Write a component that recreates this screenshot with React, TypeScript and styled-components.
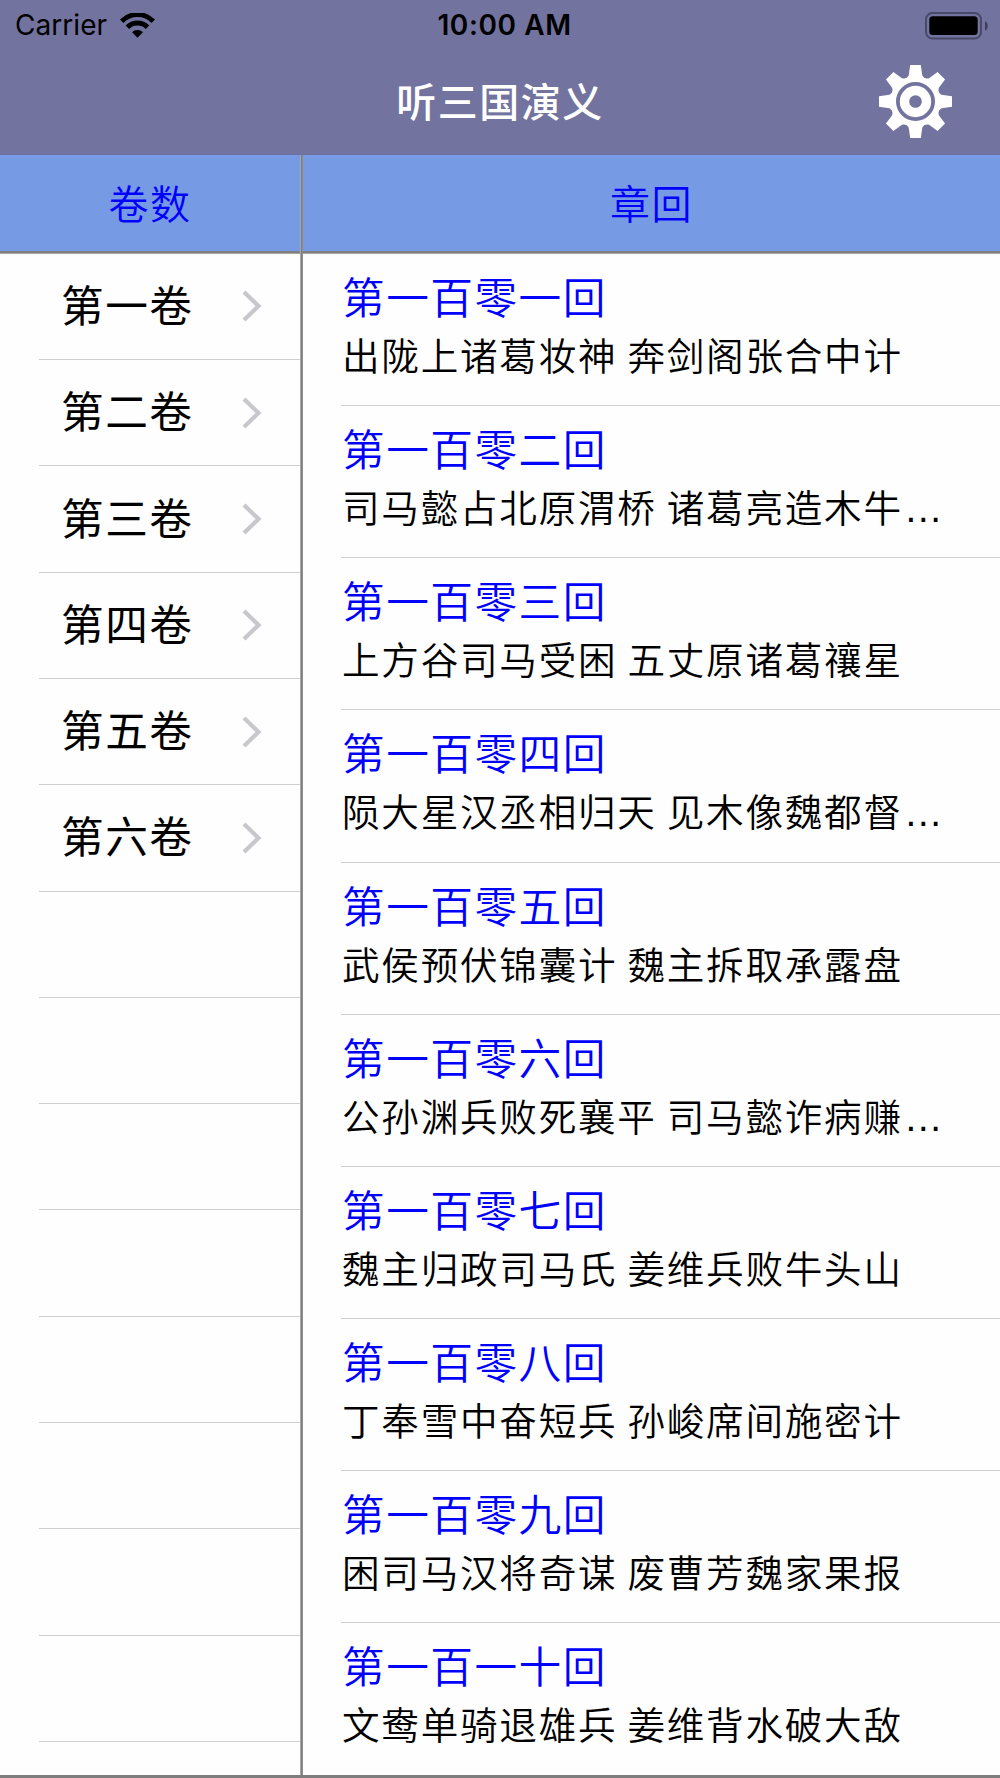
import React from "react";
import styled, { createGlobalStyle } from "styled-components";

const GlobalStyle = createGlobalStyle`
  *, *::before, *::after { box-sizing: border-box; }
  html, body { margin: 0; background: #fff; }
  body { font-family: "Noto Sans CJK SC", sans-serif; }
`;

const Screen = styled.div`
  width: 1000px;
  height: 1778px;
  display: flex;
  flex-direction: column;
  overflow: hidden;
  background: #fefefe;
  border-bottom: 3px solid #7e7e7e;
`;

const TopArea = styled.header`
  height: 155px;
  flex: none;
  background: #73739f;
  border-bottom: 1px solid #6c71a0;
`;

const StatusBar = styled.div`
  height: 51px;
  display: grid;
  grid-template-columns: 1fr auto 1fr;
  align-items: center;
  padding: 0 12px 0 15px;
  font-family: Inter, sans-serif;
  font-size: 28px;
  line-height: 51px;
  color: #000;
`;

const CarrierGroup = styled.div`
  display: flex;
  align-items: center;
  gap: 13px;
`;

const Carrier = styled.span`
  letter-spacing: 0.05px;
`;

const Clock = styled.span`
  padding-left: 6px;
  font-weight: 600;
  font-size: 28px;
  letter-spacing: 0.6px;
`;

const BatterySlot = styled.div`
  display: flex;
  justify-content: flex-end;
`;

const NavBar = styled.div`
  height: 101px;
  display: grid;
  grid-template-columns: 1fr auto 1fr;
  align-items: center;
  padding: 0 48px;
`;

const NavTitle = styled.h1`
  grid-column: 2;
  margin: 0;
  padding-bottom: 3px;
  font-size: 40px;
  font-weight: 500;
  letter-spacing: 1.5px;
  line-height: 98px;
  color: #fff;
`;

const SettingsButton = styled.button`
  justify-self: end;
  padding: 0;
  border: 0;
  background: none;
  display: flex;
`;

const Columns = styled.main`
  flex: 1;
  min-height: 0;
  display: flex;
`;

const Column = styled.section<{ $width?: number }>`
  ${(p) => (p.$width ? `flex: 0 0 ${p.$width}px;` : "flex: 1; min-width: 0;")}
  overflow: hidden;
`;

const Divider = styled.div`
  flex: 0 0 3px;
  background: linear-gradient(to right, #a8a8a8 1px, #808080 1px 2px, #8c8c8c 2px);
`;

const ColumnHeader = styled.h2`
  height: 98px;
  margin: 0;
  text-align: center;
  background: #779ae5;
  border-bottom: 2px solid #808080;
  box-shadow: 0 1px #a6a39f;
  font-size: 40px;
  font-weight: 350;
  letter-spacing: 1.6px;
  line-height: 94px;
  color: #00f;
`;

const List = styled.ul`
  margin: 0;
  padding: 0.8px 0 0;
  list-style: none;
`;

const VolumeRow = styled.li`
  height: 106.3px;
  margin-left: 39px;
  padding: 0 38px 0 22px;
  display: flex;
  align-items: center;
  justify-content: space-between;
  border-bottom: 1px solid #cfcfd2;
  color: #000;
`;

const VolumeName = styled.span`
  padding-bottom: 5px;
  font-size: 42.67px;
  letter-spacing: 1.5px;
  line-height: 96px;
`;

const ChapterRow = styled.li`
  height: 152.2px;
  margin-left: 38px;
  padding: 13px 0 0 1px;
  border-bottom: 1px solid #cfcfd2;
`;

const ChapterNumber = styled.div`
  font-size: 42.67px;
  font-weight: 350;
  letter-spacing: 1.5px;
  line-height: 58px;
  color: #00f;
`;

const ChapterTitle = styled.div`
  font-size: 37.6px;
  font-weight: 350;
  letter-spacing: 1.75px;
  line-height: 58px;
  white-space: nowrap;
  color: #000;
`;

const Dots = styled.span`
  margin-left: 1px;
  font-family: "Liberation Sans", sans-serif;
  font-size: 39px;
  letter-spacing: 0;
  line-height: 1;
`;

const WifiIcon = () => (
  <svg width="35" height="25" viewBox="0 0 35 25" fill="none" stroke="#000">
    <path d="M1.7 8.2 C10.5 -0.7 24.5 -0.7 33.3 8.2" strokeWidth="4.9" />
    <path d="M7.4 14.2 C13 8.6 22 8.6 27.6 14.2" strokeWidth="4.9" />
    <path d="M12.1 19.2 C15 16.2 20 16.2 22.9 19.2 L17.5 24.8Z" fill="#000" stroke="none" />
  </svg>
);

const BatteryIcon = () => (
  <svg width="63" height="28" viewBox="0 0 63 28">
    <rect x="1" y="1" width="55" height="25.5" rx="6.5" fill="none" stroke="#48486a" strokeWidth="2" />
    <rect x="4.3" y="4.3" width="48.4" height="18.8" rx="3.5" fill="#000" />
    <path d="M60 9.3c3.6 1.3 3.6 8 0 9.3z" fill="#3e3e58" />
  </svg>
);

const teeth = [0, 45, 90, 135, 180, 225, 270, 315];

const GearIcon = () => (
  <svg width="73" height="73" viewBox="-36.5 -36.5 73 73">
    <g fill="#fff">
      {teeth.map((angle) => (
        <path
          key={angle}
          transform={`rotate(${angle})`}
          d="M-5.3 -36.5H5.3L6.8 -26Q8 -23.5 12 -22L0 0L-12 -22Q-8 -23.5 -6.8 -26Z"
        />
      ))}
      <circle r="24.5" />
    </g>
    <circle r="17.6" fill="none" stroke="#73739f" strokeWidth="3.8" />
    <circle r="6.3" fill="#73739f" />
  </svg>
);

const Chevron = () => (
  <svg width="20" height="32" viewBox="0 0 20 32" fill="none">
    <path d="M2 2L16.5 16L2 30" stroke="#c7c7cc" strokeWidth="4.2" />
  </svg>
);

const volumes = ["第一卷", "第二卷", "第三卷", "第四卷", "第五卷", "第六卷", "", "", "", "", "", "", "", ""];

interface Chapter {
  number: string;
  title: string;
  cut?: boolean;
}

const chapters: Chapter[] = [
  { number: "第一百零一回", title: "出陇上诸葛妆神 奔剑阁张合中计" },
  { number: "第一百零二回", title: "司马懿占北原渭桥 诸葛亮造木牛", cut: true },
  { number: "第一百零三回", title: "上方谷司马受困 五丈原诸葛禳星" },
  { number: "第一百零四回", title: "陨大星汉丞相归天 见木像魏都督", cut: true },
  { number: "第一百零五回", title: "武侯预伏锦囊计 魏主拆取承露盘" },
  { number: "第一百零六回", title: "公孙渊兵败死襄平 司马懿诈病赚", cut: true },
  { number: "第一百零七回", title: "魏主归政司马氏 姜维兵败牛头山" },
  { number: "第一百零八回", title: "丁奉雪中奋短兵 孙峻席间施密计" },
  { number: "第一百零九回", title: "困司马汉将奇谋 废曹芳魏家果报" },
  { number: "第一百一十回", title: "文鸯单骑退雄兵 姜维背水破大敌" },
];

export default function App() {
  return (
    <>
      <GlobalStyle />
      <Screen>
        <TopArea>
          <StatusBar>
            <CarrierGroup>
              <Carrier>Carrier</Carrier>
              <WifiIcon />
            </CarrierGroup>
            <Clock>10:00 AM</Clock>
            <BatterySlot>
              <BatteryIcon />
            </BatterySlot>
          </StatusBar>
          <NavBar>
            <NavTitle>听三国演义</NavTitle>
            <SettingsButton aria-label="设置">
              <GearIcon />
            </SettingsButton>
          </NavBar>
        </TopArea>
        <Columns>
          <Column $width={300}>
            <ColumnHeader>卷数</ColumnHeader>
            <List>
              {volumes.map((name, i) => (
                <VolumeRow key={i}>
                  {name && (
                    <>
                      <VolumeName>{name}</VolumeName>
                      <Chevron />
                    </>
                  )}
                </VolumeRow>
              ))}
            </List>
          </Column>
          <Divider />
          <Column>
            <ColumnHeader>章回</ColumnHeader>
            <List>
              {chapters.map((c) => (
                <ChapterRow key={c.number}>
                  <ChapterNumber>{c.number}</ChapterNumber>
                  <ChapterTitle>
                    {c.title}
                    {c.cut && <Dots>…</Dots>}
                  </ChapterTitle>
                </ChapterRow>
              ))}
            </List>
          </Column>
        </Columns>
      </Screen>
    </>
  );
}
